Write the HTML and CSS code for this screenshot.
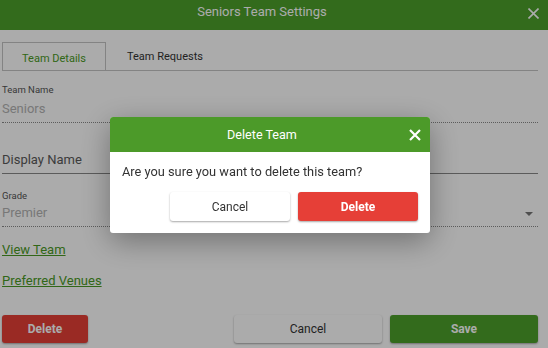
FILE: index.html
```html
<!DOCTYPE html>
<html lang="en">
<head>
    <meta charset="UTF-8">
    <meta name="viewport" content="width=device-width, initial-scale=1.0">
    <title>Seniors Team Settings</title>
    <link rel="stylesheet" href="styles.css">
</head>
<body>
<div class="settings">
    <div class="settings-header">
        <span class="settings-title">Seniors Team Settings</span>
        <svg class="close-btn" width="11" height="11" viewBox="0 0 11 11">
            <path d="M0.5 0.5 L10.5 10.5 M10.5 0.5 L0.5 10.5" stroke="#fff" stroke-width="1.6" fill="none"/>
        </svg>
    </div>

    <div class="tabs">
        <div class="tab active">Team Details</div>
        <div class="tab">Team Requests</div>
    </div>

    <div class="field readonly">
        <label>Team Name</label>
        <div class="value">Seniors</div>
    </div>

    <div class="field input">
        <div class="value">Display Name</div>
    </div>

    <div class="field readonly select">
        <label>Grade</label>
        <div class="value">Premier</div>
        <span class="caret"></span>
    </div>

    <a class="link first" href="#">View Team</a>
    <a class="link" href="#">Preferred Venues</a>

    <div class="actions">
        <button class="btn btn-red small">Delete</button>
        <div class="spacer"></div>
        <button class="btn btn-light wide">Cancel</button>
        <button class="btn btn-green wide">Save</button>
    </div>
</div>

<!-- confirm dialog -->
<div class="overlay">
    <div class="dialog">
        <div class="dialog-header">
            <span>Delete Team</span>
            <svg class="dialog-close" width="12" height="12" viewBox="0 0 12 12">
                <path d="M1 1 L11 11 M11 1 L1 11" stroke="#fff" stroke-width="2.2" fill="none"/>
            </svg>
        </div>
        <div class="dialog-body">
            <p>Are you sure you want to delete this team?</p>
            <div class="dialog-actions">
                <button class="btn btn-white">Cancel</button>
                <button class="btn btn-red bold">Delete</button>
            </div>
        </div>
    </div>
</div>
</body>
</html>
```

FILE: styles.css
```css
/* Genel */
body {
    margin: 0;
    font-family: Roboto, 'Liberation Sans', sans-serif;
    background: #fff;
    color: #333;
    width: 548px;
    height: 348px;
    overflow: hidden;
}

.settings {
    display: flex;
    flex-direction: column;
    height: 348px;
    padding: 0 10px 0 2px;
    box-sizing: border-box;
}

/* Ust bar */
.settings-header {
    height: 30px;
    margin: 0 -10px 0 -2px;
    background: #4ca02b;
    color: #fff;
    display: flex;
    align-items: center;
    justify-content: center;
    position: relative;
    font-size: 13px;
}

.settings-title {
    margin: -8px 24px 0 0;
}

.close-btn {
    position: absolute;
    right: 9px;
    top: 8px;
}

/* Sekmeler */
.tabs {
    display: flex;
    margin-top: 12px;
    height: 28px;
    border-bottom: 1px solid #c4c4c4;
}

.tab {
    width: 104px;
    box-sizing: border-box;
    font-size: 11px;
    color: #333;
    display: flex;
    align-items: center;
    justify-content: center;
}

.tab.active {
    color: #4a9a25;
    border: 1px solid #c4c4c4;
    border-bottom: none;
    padding-top: 3px;
    margin-right: 15px;
}

.tab:not(.active) {
    justify-content: flex-start;
    padding-left: 6px;
}

/* Alanlar */
.field {
    position: relative;
}

.field label {
    display: block;
    font-size: 9.5px;
    line-height: 12px;
    color: #555;
    margin-top: 13px;
}

.field .value {
    font-size: 13px;
    line-height: 22px;
    color: #b3b3b3;
    border-bottom: 1px dotted #8a8a8a;
    padding: 2px 0 2px;
}

.field.input {
    margin-top: 26px;
}

.field.input .value {
    color: #5a5a5a;
    border-bottom: 1px solid #888;
    padding: 0 0 2px;
}

.field.select label {
    margin-top: 16px;
}

.field.select .value {
    padding-top: 0;
}

.caret {
    position: absolute;
    right: 5px;
    bottom: 11px;
    border-left: 4px solid transparent;
    border-right: 4px solid transparent;
    border-top: 4px solid #777;
}

.link {
    font-size: 13px;
    line-height: 20px;
    color: #4a9a25;
    text-decoration: underline;
    align-self: flex-start;
    margin-top: 11px;
}

.link.first {
    margin-top: 13px;
}

/* Butonlar */
.actions {
    display: flex;
    gap: 8px;
    margin-top: 24px;
}

.spacer {
    flex: 1;
}

.btn {
    font-family: Roboto, 'Liberation Sans', sans-serif;
    font-size: 12px;
    height: 28px;
    border: none;
    border-radius: 3px;
    box-shadow: 0 1px 2px rgba(0, 0, 0, 0.35);
    cursor: pointer;
}

.btn.small {
    width: 86px;
    font-weight: bold;
}

.btn.wide {
    width: 148px;
}

.btn-red {
    background: #e63f37;
    color: #fff;
}

.btn-green {
    background: #4ca02b;
    color: #fff;
    font-weight: bold;
}

.btn-light {
    background: #fff;
    color: #333;
}

/* Onay penceresi */
.overlay {
    position: fixed;
    inset: 0;
    background: rgba(0, 0, 0, 0.33);
}

.dialog {
    position: absolute;
    left: 110px;
    top: 117px;
    width: 320px;
    background: #fff;
    border-radius: 3px;
    overflow: hidden;
    box-shadow: 0 8px 30px rgba(0, 0, 0, 0.35);
}

.dialog-header {
    height: 35px;
    background: #4c9a29;
    color: #fff;
    font-size: 12.6px;
    display: flex;
    align-items: center;
    justify-content: center;
    position: relative;
}

.dialog-header span {
    margin-right: 16px;
}

.dialog-close {
    position: absolute;
    right: 9px;
    top: 12px;
}

.dialog-body {
    padding: 12px;
}

.dialog-body p {
    margin: 0;
    font-size: 12.8px;
    line-height: 16px;
    color: #333;
}

.dialog-actions {
    display: flex;
    justify-content: flex-end;
    gap: 8px;
    margin-top: 12px;
}

.dialog-actions .btn {
    width: 120px;
    height: 29px;
}

.btn-white {
    background: #fff;
    color: #333;
}

.btn.bold {
    font-weight: bold;
}
```
